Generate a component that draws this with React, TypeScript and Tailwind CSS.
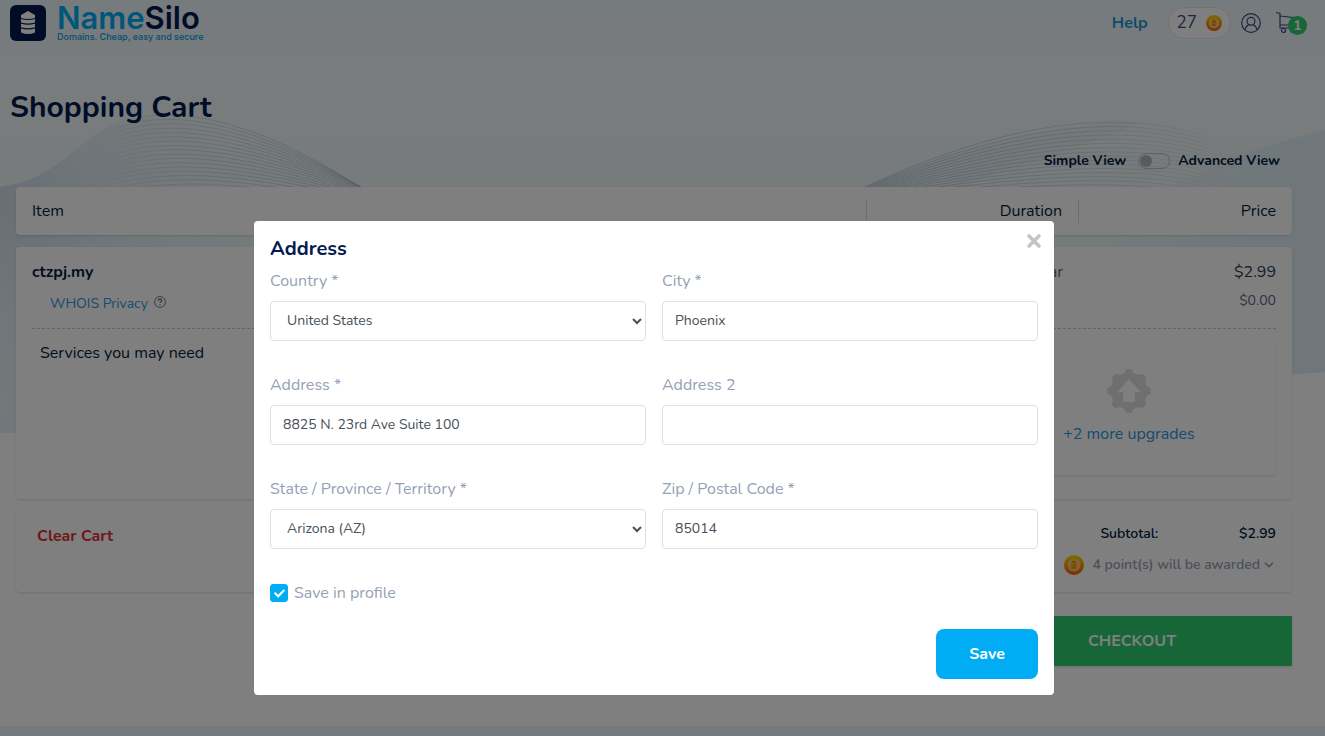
import React from 'react';
import { FaCheck } from 'react-icons/fa';
import { ChevronDown } from 'lucide-react';

interface FieldProps {
  id: string;
  label: string;
  value: string;
  options?: string[];
}

const controlClass = 'h-10 w-full rounded border border-[#dee0e2] bg-white px-3 pb-0.5 text-sm text-[#495057]';

const Field: React.FC<FieldProps> = ({ id, label, value, options }) => (
  <div className="flex flex-col gap-2">
    <label htmlFor={id} className="text-base leading-6 text-[#95a1b5]">{label}</label>
    {options ? (
      <select id={id} defaultValue={value} className={controlClass}>
        {options.map((option) => <option key={option}>{option}</option>)}
      </select>
    ) : (
      <input id={id} type="text" defaultValue={value} className={controlClass} />
    )}
  </div>
);

const fields: FieldProps[] = [
  { id: 'country', label: 'Country *', value: 'United States', options: ['United States', 'Canada'] },
  { id: 'city', label: 'City *', value: 'Phoenix' },
  { id: 'address', label: 'Address *', value: '8825 N. 23rd Ave Suite 100' },
  { id: 'address2', label: 'Address 2', value: '' },
  { id: 'state', label: 'State / Province / Territory *', value: 'Arizona (AZ)', options: ['Arizona (AZ)', 'Nevada (NV)'] },
  { id: 'zip', label: 'Zip / Postal Code *', value: '85014' },
];

const SiloMark = () => (
  <svg viewBox="0 0 36 36" className="size-9" aria-hidden="true">
    <rect width="36" height="36" rx="6" fill="#031b4e" />
    <path d="M18 6l7 4v3q-7 2-14 0v-3z" fill="#fff" />
    <path d="M11 14q7 2 14 0v3.500q-7 2-14 0zM11 18.700q7 2 14 0v3.500q-7 2-14 0zM11 23.400q7 2 14 0v4q-7 3-14 0z" fill="#fff" />
  </svg>
);

const Coin = ({ className }: { className: string }) => (
  <svg viewBox="0 0 20 20" className={className} aria-hidden="true">
    <defs>
      <linearGradient id="coin" x1="0" y1="0" x2="0" y2="1">
        <stop offset="0" stopColor="#ffdc00" />
        <stop offset="1" stopColor="#ff5a00" />
      </linearGradient>
    </defs>
    <circle cx="10" cy="10" r="10" fill="url(#coin)" />
    <circle cx="10" cy="10" r="6.500" fill="#ffcb78" />
    <path d="M10 5.300l2.700 1.600v1.400h-5.400v-1.400zM7.300 8.900h5.400v1.700h-5.400zM7.300 11.200h5.400v2.600h-5.400z" fill="#f59400" />
  </svg>
);

const UserIcon = () => (
  <svg viewBox="0 0 20 20" className="size-5" fill="none" stroke="#3c4a80" strokeWidth="1.200" aria-hidden="true">
    <circle cx="10" cy="10" r="9.300" />
    <circle cx="10" cy="8.200" r="3.900" />
    <path d="M3.800 16.800c.6-2.600 2-4.200 3.900-5.200M16.200 16.800c-.6-2.600-2-4.200-3.900-5.200" />
  </svg>
);

const CartIcon = () => (
  <svg viewBox="0 0 24 24" className="size-6" fill="none" stroke="#3c4a80" strokeWidth="1.200" aria-hidden="true">
    <path d="M0 1.500l4 1v14.500h15M4 5l17 2-2 7H4" />
    <circle cx="7.500" cy="19.500" r="2" />
    <circle cx="17" cy="19.500" r="2" />
  </svg>
);

const UpgradeIcon = () => {
  const teeth = [0, 45, 90, 135, 180, 225, 270, 315];
  return (
    <svg viewBox="0 0 44 44" className="size-11" fill="#dfdfdf" aria-hidden="true">
      <circle cx="22" cy="22" r="18" />
      {teeth.map((angle) => (
        <path key={angle} d="M15 6l3-3 1.500-3h5l1.500 3 3 3z" transform={`rotate(${angle} 22 22)`} />
      ))}
      <path d="M22 10l11.500 13h-5.500v10h-12v-10h-5.500z" fill="#fff" />
    </svg>
  );
};

const lines = Array.from({ length: 24 }, (_, i) => i);

const Waves = () => (
  <svg
    viewBox="0 0 1325 440"
    preserveAspectRatio="none"
    className="absolute inset-x-0 top-0 h-[440px] w-full"
    aria-hidden="true"
  >
    <defs>
      <linearGradient id="sky" x1="0" y1="0" x2="0" y2="1">
        <stop offset="0" stopColor="#ecf6fb" />
        <stop offset="0.220" stopColor="#f3f9fb" />
        <stop offset="0.420" stopColor="#edf6f8" />
        <stop offset="1" stopColor="#e3eff5" />
      </linearGradient>
      <radialGradient id="swell" gradientUnits="userSpaceOnUse" cx="0" cy="200" r="260">
        <stop offset="0" stopColor="#cfe0ec" />
        <stop offset="0.500" stopColor="#dfebf2" stopOpacity="0.700" />
        <stop offset="1" stopColor="#e8f2f6" stopOpacity="0" />
      </radialGradient>
      <linearGradient id="edge" gradientUnits="userSpaceOnUse" x1="1325" y1="0" x2="1100" y2="0">
        <stop offset="0" stopColor="#deeef5" />
        <stop offset="1" stopColor="#deeef5" stopOpacity="0" />
      </linearGradient>
      <linearGradient id="fanLeft" gradientUnits="userSpaceOnUse" x1="75" y1="0" x2="360" y2="0">
        <stop offset="0" stopColor="#a3b6bf" stopOpacity="0" />
        <stop offset="0.350" stopColor="#a3b6bf" stopOpacity="0.450" />
        <stop offset="1" stopColor="#a3b6bf" stopOpacity="0.700" />
      </linearGradient>
      <linearGradient id="fanRight" gradientUnits="userSpaceOnUse" x1="865" y1="0" x2="1270" y2="0">
        <stop offset="0" stopColor="#a3b8c6" stopOpacity="0.800" />
        <stop offset="0.600" stopColor="#a3b6bf" stopOpacity="0.450" />
        <stop offset="1" stopColor="#a3b6bf" stopOpacity="0" />
      </linearGradient>
    </defs>
    <path d="M0 0H1325V372C1100 388 900 440 600 440H140C90 440 60 432 0 433Z" fill="url(#sky)" />
    <path d="M0 187C60 178 70 145 110 127C200 95 300 150 360 190V440H0Z" fill="url(#swell)" />
    <path d="M865 187C960 148 1060 122 1140 122C1080 150 1000 170 960 187Z" fill="#dfebf3" opacity="0.500" />
    <path d="M1325 130C1250 150 1200 160 1050 260V388C1200 375 1260 376 1325 372Z" fill="url(#edge)" />
    <g fill="none" strokeWidth="0.800">
      {lines.map((i) => (
        <path
          key={`l${i}`}
          stroke="url(#fanLeft)"
          d={`M${95 - i} ${136 + i * 4}C${150 + i} ${98 + i * 5} ${240 - i} ${110 + i * 4} ${360 + i * 4} ${187 + i * 2}`}
        />
      ))}
      {lines.map((i) => (
        <path
          key={`r${i}`}
          stroke="url(#fanRight)"
          d={`M865 ${187 + i}C${1000 + i} ${125 + i * 4} ${1140 + i * 3} ${92 + i * 5} ${1260 + i} ${160 + i * 4}`}
        />
      ))}
    </g>
  </svg>
);

const Header = () => (
  <header className="flex h-[46px] items-center justify-between pl-[10px]">
    <a href="#home" className="flex items-center gap-[11px]">
      <SiloMark />
      <span className="flex flex-col font-[Inter]">
        <span className="text-[31px] leading-7 font-semibold text-[#031b4e]">
          <span className="text-[#00adf4]">Name</span>Silo
        </span>
        <span className="text-[9px] leading-[10px] font-medium text-[#00a0e0]">Domains. Cheap, easy and secure</span>
      </span>
    </a>
    <nav className="flex items-center">
      <a href="#help" className="mr-5 text-base font-bold text-[#1f97d8]">Help</a>
      <a href="#points" className="mr-[10px] flex h-8 items-center gap-[9px] rounded-full border border-[#e6e6e6] bg-white px-2 text-[17px] text-[#3c4a80]">
        27
        <Coin className="size-4" />
      </a>
      <button type="button" aria-label="Account" className="mr-[15px]"><UserIcon /></button>
      <a href="#cart" aria-label="Cart" className="relative mr-2">
        <CartIcon />
        <span className="absolute top-[5px] left-3 flex size-[19px] items-center justify-center rounded-full bg-[#2ecc71] text-sm font-bold text-white">1</span>
      </a>
    </nav>
  </header>
);

const CartTable = () => (
  <table className="flex flex-col gap-3">
    <thead className="block rounded bg-white shadow">
      <tr className="flex h-12 items-center text-base text-[#031b3e]">
        <th className="flex-1 pl-4 text-left font-normal">Item</th>
        <th className="w-[212px] border-l border-[#d8d8d8] pr-4 text-right font-normal">Duration</th>
        <th className="w-[214px] border-l border-[#d8d8d8] pr-4 text-right font-normal">Price</th>
      </tr>
    </thead>
    <tbody className="block rounded bg-white px-4 pt-3 pb-6 shadow">
      <tr className="flex h-[26px] items-center text-base">
        <td className="flex-1 font-bold text-[#031b3e]">ctzpj.my</td>
        <td className="text-[#5b6987]">1 Year</td>
        <td className="w-[213px] text-right text-[#2a3a5c]">$2.99</td>
      </tr>
      <tr className="flex h-11 items-start border-b border-dashed border-[#c8c8c8] pt-[6px] text-sm">
        <td className="flex flex-1 items-start gap-[6px] pt-[3px] pl-[18px]">
          <a href="#whois" className="text-[#2f95dc]">WHOIS Privacy</a>
          <svg viewBox="0 0 12 12" className="mt-0.5 size-3" fill="none" stroke="#5b6987" aria-label="What is this?">
            <circle cx="6" cy="6" r="5.400" strokeWidth="0.900" />
            <path d="M4.300 4.700c0-2.100 3.500-2.100 3.500 0c0 1.100-1.800 1.200-1.800 2.300M6 8.200v1.200" strokeWidth="1.100" />
          </svg>
        </td>
        <td className="text-[#5b6987]">$0.00</td>
      </tr>
      <tr className="flex justify-between pt-3">
        <td className="pl-2 text-base text-[#031b3e]">Services you may need</td>
        <td className="flex h-[134px] w-[294px] flex-col items-center gap-[9px] rounded pt-7 shadow">
          <UpgradeIcon />
          <a href="#upgrades" className="text-base text-[#2f95dc]">+2 more upgrades</a>
        </td>
      </tr>
    </tbody>
  </table>
);

const Summary = () => (
  <section className="flex h-[81px] items-start justify-between rounded bg-white px-4 pt-[13px] shadow">
    <button type="button" className="pl-[5px] text-base font-bold text-[#e02f2f]">Clear Cart</button>
    <div className="flex flex-col gap-[9px]">
      <div className="flex items-center justify-between pl-9 text-sm leading-5 font-semibold text-[#031b3e]">
        <span>Subtotal:</span>
        <span>$2.99</span>
      </div>
      <button type="button" className="flex items-center text-sm leading-6 font-semibold text-[#95a1b0]">
        <Coin className="mr-2 size-5" />
        4 point(s) will be awarded
        <ChevronDown className="ml-0.5 size-[14px]" strokeWidth={3} />
      </button>
    </div>
  </section>
);

const AddressDialog = () => (
  <div className="absolute inset-0 flex items-start justify-center bg-black/50 pt-[221px] pr-[17px]">
    <div role="dialog" aria-labelledby="dialog-title" className="relative w-full max-w-[800px] rounded bg-white p-4">
      <button type="button" aria-label="Close" className="absolute top-3 right-3">
        <svg viewBox="0 0 16 16" className="size-4" stroke="#c4c4c4" strokeWidth="3.600" strokeLinecap="round">
          <path d="M3 3l10 10M13 3L3 13" />
        </svg>
      </button>
      <h2 id="dialog-title" className="text-xl leading-6 font-bold text-[#031b4e]">Address</h2>
      <form className="mt-2">
        <div className="grid grid-cols-2 gap-x-4 gap-y-8">
          {fields.map((field) => <Field key={field.id} {...field} />)}
        </div>
        <label className="mt-8 flex items-center gap-[6px] text-base leading-6 text-[#95a1b5]">
          <span className="grid place-items-center">
            <input type="checkbox" defaultChecked className="col-start-1 row-start-1 size-[18px] appearance-none rounded-[3px] border border-[#00adf4] checked:bg-[#00adf4]" />
            <FaCheck className="pointer-events-none col-start-1 row-start-1 size-[11px] text-white" />
          </span>
          Save in profile
        </label>
        <div className="mt-6 flex justify-end">
          <button type="button" className="h-[50px] w-[102px] rounded-lg bg-[#00adf4] text-base font-bold text-white">Save</button>
        </div>
      </form>
    </div>
  </div>
);

export default function App() {
  return (
    <div className="relative flex min-h-screen flex-col overflow-hidden bg-white font-[Nunito,Lato,sans-serif]">
      <Waves />
      <div className="relative flex-1 pr-[17px]">
        <Header />
        <main>
          <h1 className="mt-[42px] pl-[10px] text-[30px] leading-10 font-bold text-[#031b4e]">Shopping Cart</h1>
          <div className="mt-[23px] mr-7 flex h-5 items-center justify-end text-sm font-bold text-[#031b3e]">
            <label htmlFor="view">Simple View</label>
            <input
              id="view"
              type="checkbox"
              role="switch"
              aria-label="Advanced View"
              className="mr-2 ml-3 flex h-4 w-8 appearance-none items-center rounded-full border border-[#bfc0c6] pl-px before:size-3 before:rounded-full before:bg-[#b4b4bd]"
            />
            <span>Advanced View</span>
          </div>
          <div className="mt-4 flex flex-col gap-3 px-4">
            <CartTable />
            <Summary />
            <button type="button" className="mt-3 h-[50px] w-80 self-end bg-[#2ecc71] text-base font-bold text-white shadow">CHECKOUT</button>
          </div>
        </main>
      </div>
      <footer className="relative h-[10px] bg-[#eaf5fb]" />
      <AddressDialog />
    </div>
  );
}
